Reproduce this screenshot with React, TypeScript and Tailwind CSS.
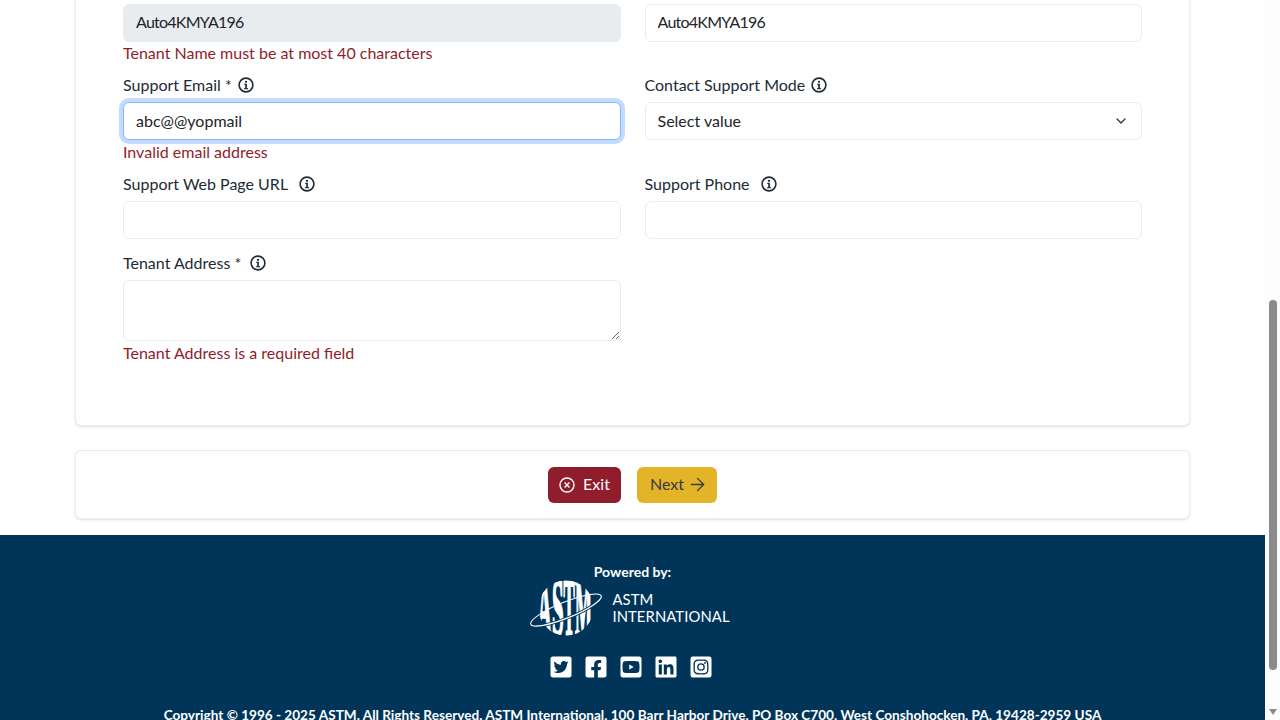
import React from 'react';
import { ChevronDown, ArrowRight } from 'lucide-react';
import { FaTwitterSquare, FaFacebookSquare, FaYoutubeSquare, FaLinkedin, FaInstagramSquare } from 'react-icons/fa';

const InfoIcon = () => (
  <svg width="16" height="16" viewBox="0 0 16 16" className="shrink-0 text-[#212b36]">
    <circle cx="8" cy="8" r="6.9" fill="none" stroke="currentColor" strokeWidth="1.6" />
    <circle cx="8" cy="4.8" r="1.15" fill="currentColor" />
    <path d="M6.3 6.8h2.6v4.2h1v1.3H6.2V11h1V8.1h-.9z" fill="currentColor" />
  </svg>
);

const FieldLabel = ({ text, gap = 'ml-[6px]' }: { text: string; gap?: string }) => (
  <div className="flex items-center h-6 mb-[5.5px] text-[#212b36]">
    <span>{text}</span>
    <span className={gap}>
      <InfoIcon />
    </span>
  </div>
);

const FieldError = ({ text, extra = '' }: { text: string; extra?: string }) => (
  <div className={`h-6 -mb-1 leading-6 text-[#8f1d2c] ${extra}`}>{text}</div>
);

const inputClass = 'block w-full h-[37.5px] px-3 rounded-md border border-[#e9ecef] bg-white text-[#212529]';

const Logo = () => (
  <svg width="72" height="58" viewBox="0 0 72 58" className="shrink-0">
    <defs>
      <clipPath id="globe">
        <circle cx="36" cy="29" r="27.5" />
      </clipPath>
    </defs>
    <g transform="rotate(-22 36 31)">
      <ellipse cx="36" cy="31" rx="38" ry="8" fill="none" stroke="#fff" strokeWidth="1" />
    </g>
    <g clipPath="url(#globe)" fill="#fff" stroke="#fff" strokeWidth="1" fontFamily="'Liberation Serif', serif" fontWeight="700">
      <text fontSize="30" transform="translate(8 56) scale(0.62 2.75)">A</text>
      <text fontSize="30" transform="translate(22 56) scale(0.7 2.75)">S</text>
      <text fontSize="30" transform="translate(33.5 56) scale(0.56 2.75)">T</text>
      <text fontSize="30" transform="translate(45 56) scale(0.6 2.75)">M</text>
    </g>
    <g transform="rotate(-22 36 31)" fill="none">
      <path d="M-2 31 A38 8 0 0 0 74 31" stroke="#003559" strokeWidth="3" />
      <path d="M-2 31 A38 8 0 0 0 74 31" stroke="#fff" strokeWidth="1.2" />
    </g>
  </svg>
);

const socials = [FaTwitterSquare, FaFacebookSquare, FaYoutubeSquare, FaLinkedin, FaInstagramSquare];

export default function App() {
  return (
    <div className="flex h-screen overflow-hidden bg-white font-['Lato',sans-serif] text-[16px]">
      <div className="flex-1 min-w-0 overflow-hidden">
        {/* form card, page is scrolled so its top is cut off */}
        <div className="mx-[75px] -mt-[60px] pt-[63px] pb-[64px] px-[47px] bg-white rounded-b-md border border-[#ececec] shadow-sm">
          <div className="grid grid-cols-2 gap-x-6">
            <div className="mb-3">
              <input
                readOnly
                value="Auto4KMYA196"
                className={`${inputClass} pb-[2px] tracking-[-0.75px] !bg-[#e9ecef] !border-[#e9ecef]`}
              />
              <FieldError text="Tenant Name must be at most 40 characters" extra="-mt-px" />
            </div>
            <div className="mb-3">
              <input readOnly value="Auto4KMYA196" className={`${inputClass} pb-[2px] tracking-[-0.75px]`} />
            </div>

            <div className="mb-3">
              <FieldLabel text="Support Email *" />
              <input
                readOnly
                value="abc@@yopmail"
                className={`${inputClass} !border-[#86b7fe] shadow-[0_0_0_4px_#c2dbfe]`}
              />
              <FieldError text="Invalid email address" />
            </div>
            <div className="mb-3">
              <FieldLabel text="Contact Support Mode" />
              <div className={`${inputClass} flex items-center justify-between`}>
                <span>Select value</span>
                <ChevronDown size={16} strokeWidth={2} className="text-[#343a40]" />
              </div>
            </div>

            <div className="mb-3">
              <FieldLabel text="Support Web Page URL" gap="ml-[11px]" />
              <input readOnly className={inputClass} />
            </div>
            <div className="mb-3">
              <FieldLabel text="Support Phone" gap="ml-[11px]" />
              <input readOnly className={inputClass} />
            </div>

            <div>
              <FieldLabel text="Tenant Address *" gap="ml-[9px]" />
              <textarea readOnly className={`${inputClass} !h-[61px]`} />
              <FieldError text="Tenant Address is a required field" />
            </div>
          </div>
        </div>

        {/* actions */}
        <div className="mx-[75px] mt-[24px] h-[69px] flex items-center justify-center gap-4 bg-white rounded-md border border-[#ececec] shadow-sm">
          <button className="flex items-center justify-center gap-2 w-[73px] h-9 pb-[2px] rounded-md bg-[#8f1d2c] text-white">
            <svg width="16" height="16" viewBox="0 0 16 16" fill="none" stroke="currentColor" strokeWidth="1.4" className="mt-[2px]">
              <circle cx="8" cy="8" r="7" />
              <path d="M5.6 5.6l4.8 4.8M10.4 5.6l-4.8 4.8" />
            </svg>
            Exit
          </button>
          <button className="flex items-center gap-[3px] w-20 h-9 pl-[13px] pb-[2px] rounded-md bg-[#e3b428] text-[#343a40]">
            Next
            <ArrowRight size={21} strokeWidth={1.5} className="mt-[2px]" />
          </button>
        </div>

        {/* footer */}
        <div className="mt-4 h-[300px] bg-[#003559] text-white flex flex-col items-center pt-[27px]">
          <div className="h-[19px] leading-[19px] text-[14px] font-bold">Powered by:</div>
          <div className="-mt-[2px] flex items-center gap-[10px] -ml-[5px]">
            <Logo />
            <div className="text-[14.8px] leading-[17px] tracking-[0.1px]">
              <div>ASTM</div>
              <div>INTERNATIONAL</div>
            </div>
          </div>
          <div className="mt-[18px] -ml-1 flex items-center gap-[11px]">
            {socials.map((Icon, i) => (
              <Icon key={i} size={24} className="text-white" />
            ))}
          </div>
          <div className="mt-[26px] text-[13.6px] leading-5 font-bold whitespace-nowrap">
            Copyright © 1996 - 2025 ASTM. All Rights Reserved. ASTM International, 100 Barr Harbor Drive, PO Box C700, West Conshohocken, PA, 19428-2959 USA
          </div>
        </div>
      </div>

      {/* scrollbar */}
      <div className="w-[15px] shrink-0 bg-[#fdfdfd] flex flex-col items-center pt-[300px]">
        <div className="w-2 h-[370px] rounded-full bg-[#8b8b8b]" />
        <div className="mt-[39px] w-0 h-0 border-x-[4.5px] border-x-transparent border-t-[6px] border-t-[#8b8b8b]" />
      </div>
    </div>
  );
}
